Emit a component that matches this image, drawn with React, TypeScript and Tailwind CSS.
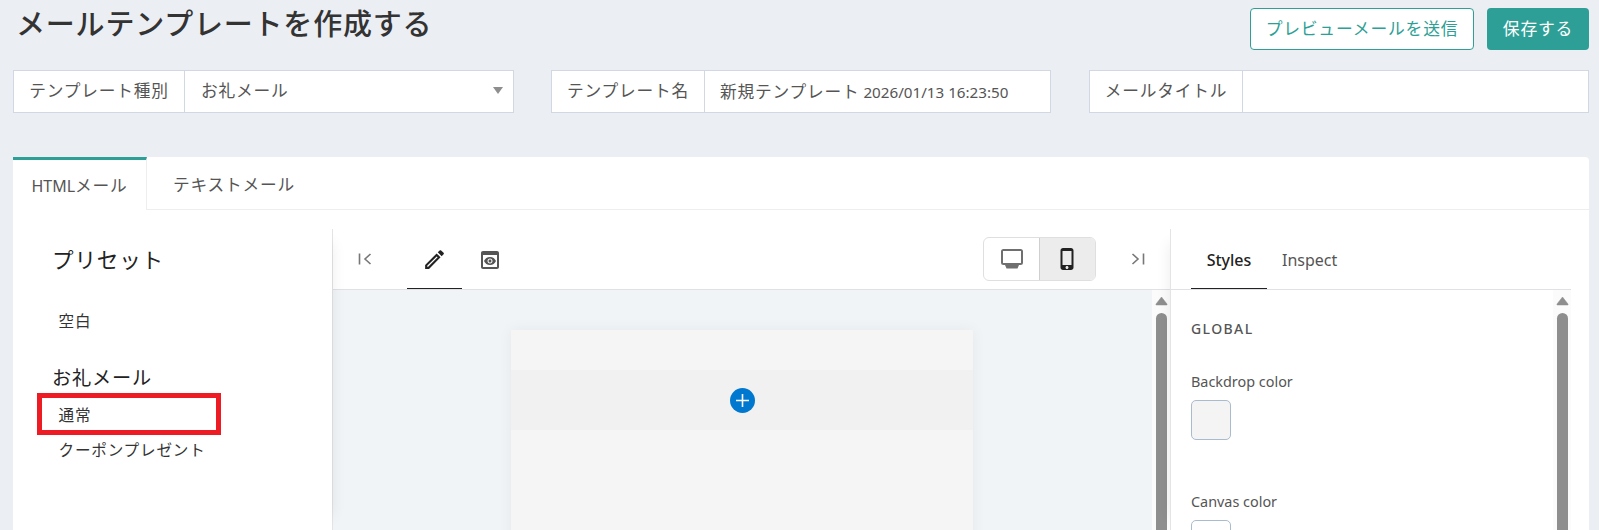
const FONT = "font-['Noto_Sans','Noto_Sans_CJK_JP',sans-serif]";

function LabeledField({
  label,
  labelWidth,
  className,
  children,
}: {
  label: string;
  labelWidth: string;
  className: string;
  children?: React.ReactNode;
}) {
  return (
    <div className={`flex h-[43px] border border-[#d1d7e3] bg-white ${className}`}>
      <div className={`flex shrink-0 items-center justify-center border-r border-[#d1d7e3] pb-[2px] text-[#555] ${labelWidth}`}>
        {label}
      </div>
      <div className="flex min-w-0 flex-1 items-center">{children}</div>
    </div>
  );
}

function Scrollbar() {
  return (
    <div className="flex w-[18px] shrink-0 flex-col items-center bg-[#fbfbfb] pt-[6px]">
      <svg width="13" height="10" viewBox="0 0 13 10" className="mb-[7px]">
        <path d="M6.5 1 L12 8 Q12.500 9 11.500 9 L1.500 9 Q0.500 9 1 8 Z" fill="#8e8e8e" stroke="#8e8e8e" strokeWidth="0.500" />
      </svg>
      <div className="w-[11px] flex-1 rounded-t-[6px] bg-[#8e8e8e]" />
    </div>
  );
}

function PanelToggle({ flip }: { flip?: boolean }) {
  return (
    <svg width="14" height="14" viewBox="0 0 14 14" fill="none" stroke="#777" strokeWidth="1.6">
      {flip ? (
        <>
          <path d="M1.5 2 L7 7 L1.5 12" />
          <path d="M12.5 1.5 V12.5" />
        </>
      ) : (
        <>
          <path d="M12.5 2 L7 7 L12.5 12" />
          <path d="M1.5 1.5 V12.5" />
        </>
      )}
    </svg>
  );
}

export default function App() {
  return (
    <div className={`h-[530px] overflow-hidden bg-[#ebeef3] pl-[13px] pr-[10px] tracking-[0.05em] ${FONT}`}>
      <header className="flex h-[70px] items-start justify-between">
        <h1 className="pl-[3px] text-[29px] font-medium leading-[48px] text-[#333]">メールテンプレートを作成する</h1>
        <div className="flex gap-[13px] pt-[8px] text-[16.800px]">
          <button
            type="button"
            className="h-[42px] w-[224px] rounded-[4px] border border-[#2e9f96] bg-white text-[#2e9f96]"
          >
            プレビューメールを送信
          </button>
          <button type="button" className="h-[42px] w-[102px] rounded-[4px] bg-[#2e9f96] text-white">
            保存する
          </button>
        </div>
      </header>

      <div className="flex text-[16.700px]">
        <LabeledField label="テンプレート種別" labelWidth="w-[171px]" className="w-[501px]">
          <div className="flex flex-1 items-center justify-between pb-[2px] pl-[16px] pr-[10px] text-[#555]">
            <span>お礼メール</span>
            <svg width="10" height="7" viewBox="0 0 10 7">
              <path d="M0 0 H10 L5 7 Z" fill="#8e8e8e" />
            </svg>
          </div>
        </LabeledField>
        <LabeledField label="テンプレート名" labelWidth="w-[153px]" className="ml-[37px] w-[500px]">
          <span className="flex items-center pl-[15px] text-[#555]">
            新規テンプレート
            <span className="ml-[4px] pt-[1px] text-[15.200px] tracking-normal">2026/01/13 16:23:50</span>
          </span>
        </LabeledField>
        <LabeledField label="メールタイトル" labelWidth="w-[153px]" className="ml-auto w-[500px]" />
      </div>

      <main className="mt-[44px] h-[373px] rounded-t-[4px] bg-white">
        <div className="flex h-[53px] border-b border-[#eeeeee] text-[16.700px]">
          <div className="-mb-px flex h-[53px] w-[134px] items-center justify-center border-t-[3px] border-r border-[#2e9f96] border-r-[#eeeeee] bg-white pt-[2px] text-[#555]">
            <span className="text-[16px] tracking-normal">HTML</span>メール
          </div>
          <div className="flex w-[174px] items-center justify-center pt-[4px] text-[#555]">テキストメール</div>
        </div>

        <div className="mt-[19px] flex h-[301px] pr-[18px]">
          <aside className="relative z-10 w-[319px] shrink-0 bg-white pl-[39px] pt-[13px] text-[#333] shadow-[14px_0_14px_-14px_rgba(0,0,0,0.08)]">
            <h2 className="text-[21.600px] leading-[36px] text-[#222]">プリセット</h2>
            <p className="mt-[31px] pl-[6.500px] text-[15.600px] leading-[24px]">空白</p>
            <h3 className="mt-[30px] text-[19.200px] leading-[30px] text-[#222]">お礼メール</h3>
            <ul className="text-[15.600px]">
              <li className="relative mt-[10px] pl-[6.500px] leading-[24px]">
                通常
                <span className="absolute left-[-15px] top-[-10px] h-[42px] w-[184px] border-[5px] border-[#ed1c24]" />
              </li>
              <li className="mt-[11px] pl-[6.500px] leading-[24px]">クーポンプレゼント</li>
            </ul>
          </aside>

          <section className="flex min-w-0 flex-1 flex-col border-l border-[#e4e4e4]">
            <div className="flex h-[61px] shrink-0 items-center border-b border-[#dfe1e5] pl-[25px] pr-[25px]">
              <PanelToggle />
              <div className="ml-[35px] flex h-full w-[55px] items-center justify-center border-b border-[#222] pt-px">
                <svg width="25" height="25" viewBox="0 0 24 24" fill="#222">
                  <path d="M14.06,9L15,9.94L5.92,19H5V18.08L14.06,9M17.66,3C17.41,3 17.15,3.1 16.96,3.29L15.13,5.12L18.88,8.87L20.71,7.04C21.1,6.65 21.1,6 20.71,5.63L18.37,3.29C18.17,3.09 17.92,3 17.66,3M14.06,6.19L3,17.25V21H6.75L17.81,9.94L14.06,6.19Z" />
                </svg>
              </div>
              <div className="flex h-full w-[55px] items-center justify-center pt-px">
                <svg width="24" height="24" viewBox="0 0 24 24" fill="#555">
                  <path d="M19 3H5c-1.11 0-2 .9-2 2v14c0 1.1.89 2 2 2h14c1.1 0 2-.9 2-2V5c0-1.1-.89-2-2-2zm0 16H5V7h14v12zm-5.5-6c0 .83-.67 1.5-1.5 1.5s-1.5-.67-1.5-1.5.67-1.5 1.5-1.5 1.5.67 1.5 1.5zM12 9c-2.73 0-5.06 1.66-6 4 .94 2.34 3.27 4 6 4s5.06-1.66 6-4c-.94-2.34-3.27-4-6-4zm0 6.5c-1.38 0-2.5-1.12-2.5-2.5s1.12-2.5 2.5-2.5 2.5 1.12 2.5 2.5-1.12 2.5-2.5 2.5z" />
                </svg>
              </div>
              <div className="ml-auto mr-[35px] flex h-[44px] w-[113px] overflow-hidden rounded-[6px] border border-[#dfdfdf]">
                <div className="flex w-[56px] items-center justify-center border-r border-[#cfcfcf]">
                  <svg width="24" height="24" viewBox="0 0 24 24" fill="#6f6f6f">
                    <path d="M3.5 2h17A2.5 2.5 0 0 1 23 4.5v11a2.5 2.5 0 0 1-2.5 2.5h-17A2.500 2.500 0 0 1 1 15.500v-11A2.500 2.500 0 0 1 3.500 2zM3 4v12h18V4z" />
                    <path d="M5 18h14l-1.500 3.500h-11z" />
                  </svg>
                </div>
                <div className="flex flex-1 items-center justify-center bg-[#ececec] pr-[2px]">
                  <svg width="24" height="24" viewBox="0 0 24 24" fill="#222">
                    <path d="M16 1H8C6.620 1 5.500 2.120 5.500 3.500v17C5.500 21.880 6.620 23 8 23h8c1.380 0 2.500-1.120 2.500-2.500v-17C18.500 2.120 17.380 1 16 1zM12 22c-.83 0-1.500-.67-1.500-1.500S11.170 19 12 19s1.500.67 1.500 1.500S12.830 22 12 22zm4.500-4h-9V4h9v14z" />
                  </svg>
                </div>
              </div>
              <PanelToggle flip />
            </div>
            <div className="flex min-h-0 flex-1 bg-[#f0f4f7]">
              <div className="flex min-w-0 flex-1 justify-center pr-[1px] pt-[40px]">
                <div className="h-[300px] w-[462px] bg-[#f5f5f5] pt-[40px] shadow-[0_0_14px_rgba(0,0,0,0.05)]">
                  <div className="flex h-[60px] items-center justify-center bg-[#f1f1f1]">
                    <svg width="25" height="25" viewBox="0 0 25 25">
                      <circle cx="12.500" cy="12.500" r="12.500" fill="#0078d0" />
                      <path d="M6 12.500 H19 M12.500 6 V19" stroke="#fff" strokeWidth="1.600" />
                    </svg>
                  </div>
                </div>
              </div>
              <Scrollbar />
            </div>
          </section>

          <section className="relative z-10 flex w-[401px] shrink-0 flex-col border-l border-[#e4e4e4] bg-white shadow-[-14px_0_14px_-14px_rgba(0,0,0,0.08)]">
            <div className="flex h-[61px] shrink-0 items-end gap-[15px] border-b border-[#dfe1e5] pl-[20px] text-[16px] tracking-normal">
              <div className="flex h-full w-[76px] items-center justify-center border-b border-[#222] pt-[2px] font-medium text-[#222]">
                Styles
              </div>
              <div className="flex h-full items-center pt-[2px] text-[#555]">Inspect</div>
            </div>
            <div className="flex min-h-0 flex-1">
              <div className="min-w-0 flex-1 pl-[20px] pt-[30px] text-[#555]">
                <div className="text-[14px] leading-[18px] font-medium tracking-[0.1em]">GLOBAL</div>
                <div className="mt-[34px] text-[14.400px] leading-[20px] tracking-normal">Backdrop color</div>
                <div className="mt-[8px] h-[40px] w-[40px] rounded-[5px] border border-[#a9bccd] bg-[#f4f4f4]" />
                <div className="mt-[52px] text-[14.400px] leading-[20px] tracking-normal">Canvas color</div>
                <div className="mt-[8px] h-[40px] w-[40px] rounded-[5px] border border-[#a9bccd] bg-white" />
              </div>
              <Scrollbar />
            </div>
          </section>
        </div>
      </main>
    </div>
  );
}
